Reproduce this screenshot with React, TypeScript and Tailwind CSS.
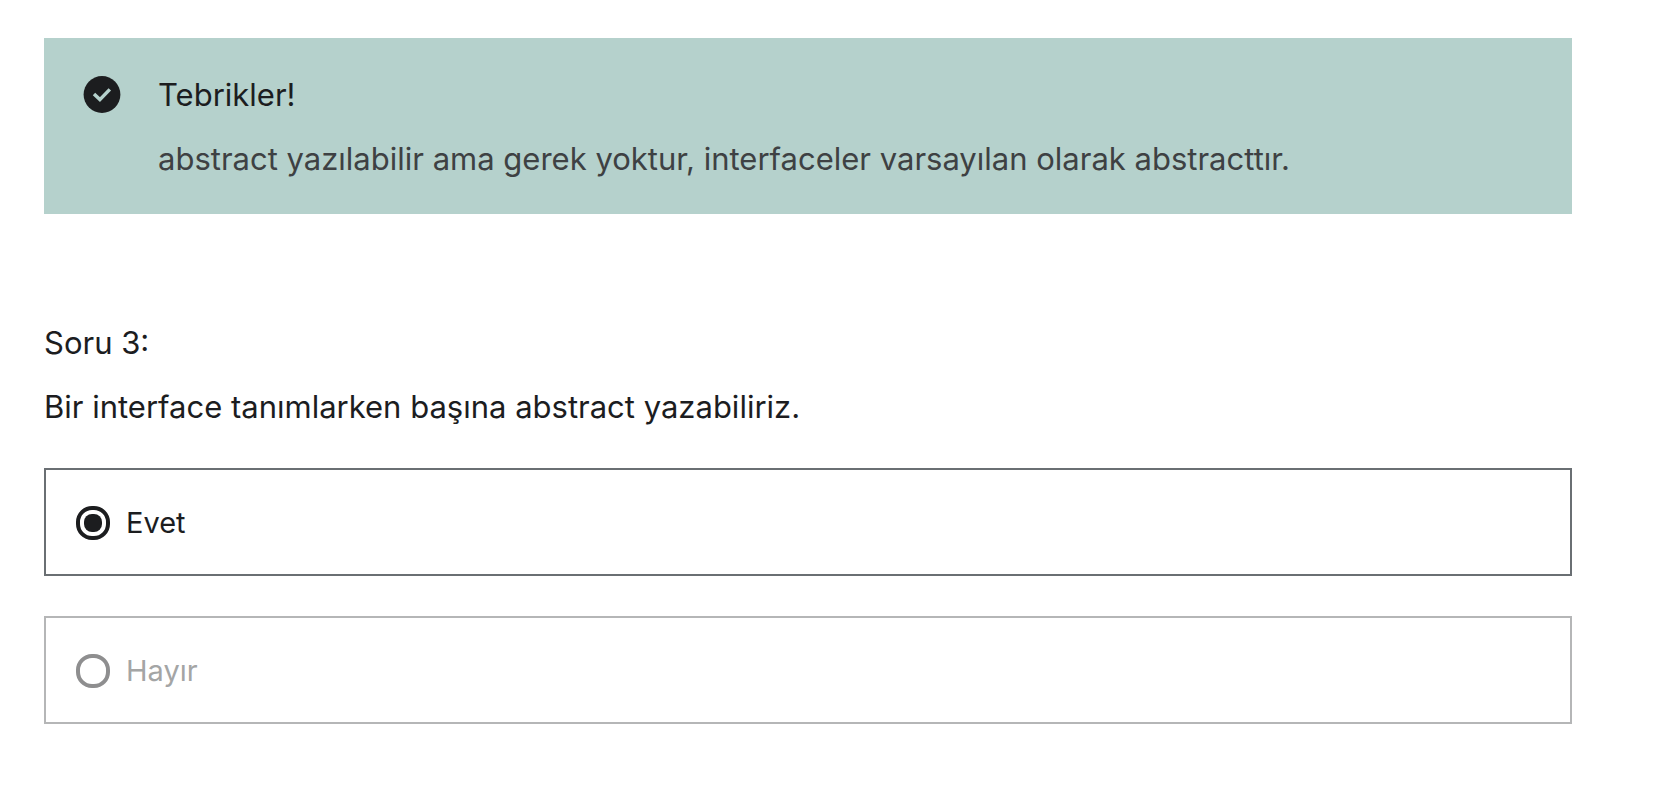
import { useState } from "react";

type Option = { value: string; label: string; disabled: boolean };

const options: Option[] = [
  { value: "evet", label: "Evet", disabled: false },
  { value: "hayir", label: "Hayır", disabled: true },
];

function CheckBadge() {
  return (
    <svg viewBox="0 0 40 40" className="mt-1 size-10 shrink-0" aria-hidden="true">
      <circle cx="20" cy="19.5" r="18.4" fill="#1c1d1f" />
      <path
        d="M12 19 L17.9 24.6 L27.8 14.4"
        fill="none"
        stroke="#b5d1cc"
        strokeWidth="3.5"
      />
    </svg>
  );
}

function Choice({
  option,
  checked,
  onSelect,
}: {
  option: Option;
  checked: boolean;
  onSelect: () => void;
}) {
  return (
    <label
      className={`flex items-center gap-4 border-2 px-[30px] pt-[33px] pb-[31px] text-[29px] leading-10 ${
        option.disabled ? "border-[#b5b6b7] text-[#a4a5a5]" : "border-[#6a6f73] text-[#1c1d1f]"
      }`}
    >
      <input
        type="radio"
        name="answer"
        value={option.value}
        checked={checked}
        disabled={option.disabled}
        onChange={onSelect}
        className="size-[34px] shrink-0 appearance-none rounded-[16px] border-4 border-[#1c1d1f] bg-clip-content p-1 checked:bg-[#1c1d1f] disabled:border-[#8e8e8f]"
      />
      {option.label}
    </label>
  );
}

export default function App() {
  const [answer, setAnswer] = useState("evet");

  return (
    <main className="min-h-screen bg-white pt-[38px] pr-[98px] pb-20 pl-11 font-['Inter',sans-serif] text-[31px] leading-[48px] text-[#1c1d1f]">
      <section role="status" className="flex gap-9 bg-[#b5d1cc] pt-[33px] pr-8 pb-[31px] pl-[38px]">
        <CheckBadge />
        <div className="flex flex-col gap-4">
          <p>Tebrikler!</p>
          <p className="text-[#3e4143]">
            abstract yazılabilir ama gerek yoktur, interfaceler varsayılan olarak abstracttır.
          </p>
        </div>
      </section>

      <form className="mt-[105px]">
        <h2>Soru 3:</h2>
        <p className="mt-4">Bir interface tanımlarken başına abstract yazabiliriz.</p>
        <div className="mt-[37px] flex flex-col gap-10">
          {options.map((option) => (
            <Choice
              key={option.value}
              option={option}
              checked={answer === option.value}
              onSelect={() => setAnswer(option.value)}
            />
          ))}
        </div>
      </form>
    </main>
  );
}
